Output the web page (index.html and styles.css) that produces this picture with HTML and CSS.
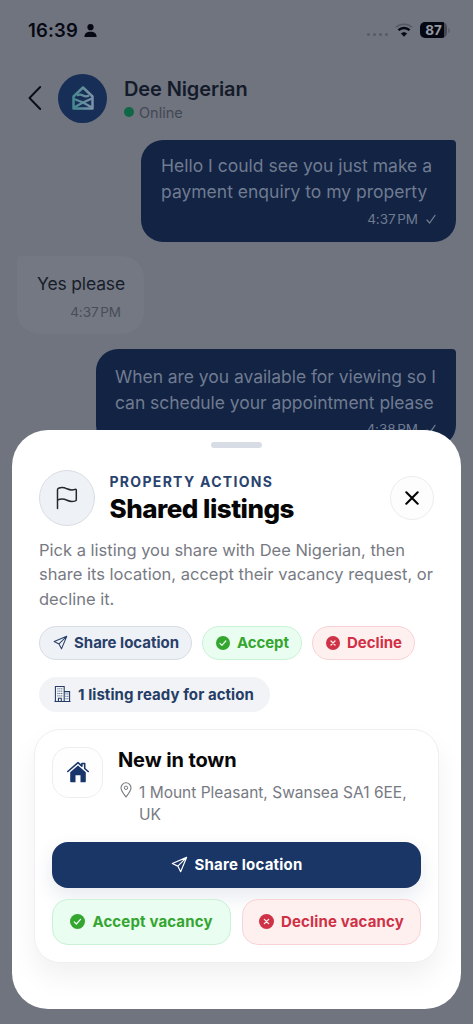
FILE: index.html
```html
<!DOCTYPE html>
<html lang="en">
<head>
<meta charset="utf-8">
<title>Shared listings</title>
<link rel="stylesheet" href="styles.css">
</head>
<body>
<svg class="defs" aria-hidden="true">
  <symbol id="plane" viewBox="0 0 18 18"><path d="M16.5 1.5 1.4 7.9l5.8 2.800 3 5.900ZM16.500 1.500 7.200 10.700" fill="none" stroke="currentColor" stroke-width="1.250" stroke-linejoin="round" stroke-linecap="round"/></symbol>
  <symbol id="check" viewBox="0 0 16 16"><circle cx="8" cy="8" r="8" fill="currentColor"/><path d="m4.5 8.4 2.3 2.3 4.4-5" fill="none" stroke="#e9fff0" stroke-width="1.4" stroke-linecap="round" stroke-linejoin="round"/></symbol>
  <symbol id="cross" viewBox="0 0 16 16"><circle cx="8" cy="8" r="8" fill="currentColor"/><path d="m5.7 5.7 4.600 4.600m0-4.600-4.600 4.600" fill="none" stroke="#fff0f0" stroke-width="1.400" stroke-linecap="round"/></symbol>
</svg>
<div class="phone">
  <main class="chat">
    <div class="status">
      <span class="time">16:39</span>
      <svg class="person" viewBox="0 0 13 13"><circle cx="6.5" cy="3.2" r="3.1"/><path d="M.4 13c0-3.6 2.3-5.3 6.1-5.3s6.1 1.7 6.1 5.3Z"/></svg>
      <span class="signal"><i></i><i></i><i></i><i></i></span>
      <svg class="wifi" viewBox="0 0 18 14"><path d="M1 4.3a12 12 0 0 1 16 0" fill="none" stroke="#555963" stroke-width="1.5"/><path d="M3.4 7.2a8.2 8.2 0 0 1 11.2 0" fill="none" stroke="#050812" stroke-width="2.4"/><path d="M6.4 10.6a4 4 0 0 1 5.2 0L9 13.3Z" fill="#050812" stroke="#050812" stroke-width=".8" stroke-linejoin="round"/></svg>
      <span class="battery">87</span><span class="nub"></span>
    </div>
    <header class="contact">
      <svg class="back" viewBox="0 0 14 26"><path d="M12.200 2 1.500 13l10.700 11" fill="none" stroke="#080d19" stroke-width="1.900" stroke-linecap="round" stroke-linejoin="round"/></svg>
      <div class="avatar"><svg viewBox="0 0 24 26"><defs><linearGradient id="mint" x1="0" y1="0" x2="1" y2="0"><stop offset="0" stop-color="#46898f"/><stop offset="1" stop-color="#7c92a8"/></linearGradient></defs><path d="M2.500 23.500V11.500L12 2.500l9.500 9v12Z" fill="none" stroke="url(#mint)" stroke-width="2.500" stroke-linejoin="round"/><path d="M6 10.500q3-1.800 6 0t6 0M3 14l9 3.500 9 5M21 13.500l-9 4-9 5" fill="none" stroke="url(#mint)" stroke-width="2.200"/></svg></div>
      <div class="who"><div class="name">Dee Nigerian</div><div class="online"><i></i><span>Online</span></div></div>
    </header>
    <section class="thread">
      <div class="bubble sent first"><p>Hello I could see you just make a<br>payment enquiry to my property</p><div class="meta">4:37 PM<svg viewBox="0 0 10 10"><path d="m1 6 2.6 3L9 1.3" fill="none" stroke="currentColor" stroke-width="1.2" stroke-linecap="round"/></svg></div></div>
      <div class="bubble received"><p>Yes please</p><div class="meta">4:37 PM</div></div>
      <div class="bubble sent second"><p>When are you available for viewing so I<br>can schedule your appointment please</p><div class="meta">4:38 PM<svg viewBox="0 0 10 10"><path d="m1 6 2.6 3L9 1.3" fill="none" stroke="currentColor" stroke-width="1.2" stroke-linecap="round"/></svg></div></div>
    </section>
  </main>
  <section class="sheet">
    <div class="handle"></div>
    <header class="heading">
      <div class="flag"><svg viewBox="0 0 22 24"><path d="M1.500 22.500V3.800Q1.500 2.800 2.600 2.200C5.800.7 8 1.300 11 2.800c3 1.300 5.600 1.500 8 .6q1.300-.4 1.300.6v9.700q0 .8-1 1.200c-3 1-5.300.8-8.300-.6-3.200-1.500-6-1.800-9.500-.1" fill="none" stroke="#24282e" stroke-width="1.500" stroke-linejoin="round" stroke-linecap="round"/></svg></div>
      <div class="titles"><div class="eyebrow">PROPERTY ACTIONS</div><h1>Shared listings</h1></div>
      <button class="close" aria-label="Close"><svg viewBox="0 0 14 14"><path d="m1.300 1.300 11.400 11.400m0-11.400L1.300 12.700" fill="none" stroke="#050505" stroke-width="2.100" stroke-linecap="round"/></svg></button>
    </header>
    <p class="intro">Pick a listing you share with Dee Nigerian, then<br>share its location, accept their vacancy request, or<br>decline it.</p>
    <div class="pills">
      <span class="pill share"><svg><use href="#plane"/></svg><b>Share location</b></span>
      <span class="pill accept"><svg><use href="#check"/></svg><b>Accept</b></span>
      <span class="pill decline"><svg><use href="#cross"/></svg><b>Decline</b></span>
    </div>
    <div class="count"><svg viewBox="0 0 18 18"><path d="M1.500 17V1h9.300v16M10.800 6.500h5.700V17M.5 17h17M4.700 17v-3.500h3V17" fill="none" stroke="currentColor" stroke-width="1.150"/><path d="M4.200 3v9M6.200 3v9M8.200 3v9M12.700 8.500v7M14.700 8.500v7" fill="none" stroke="currentColor" stroke-width="1" stroke-dasharray="1 1.500"/></svg><b>1 listing ready for action</b></div>
    <article class="card">
      <div class="listing">
        <div class="tile"><svg viewBox="0 0 22 22"><path d="M.8 10.500 11 1.700l3.900 3.400V2.500h2.800v5l3.500 3" fill="none" stroke="#19366a" stroke-width="1.600" stroke-linecap="round" stroke-linejoin="round"/><path d="m11 4.600 7.800 6.700v9.200q0 .8-.8.800h-4.500v-7h-5v7H4q-.8 0-.8-.8v-9.200Z" fill="#19366a"/></svg></div>
        <div class="info"><h2>New in town</h2><div class="address"><svg viewBox="0 0 12 16"><path d="M6 15C4.200 12.500 1 9 1 5.800a5 5 0 0 1 10 0C11 9 7.800 12.500 6 15Z" fill="none" stroke="currentColor" stroke-width="1.100"/><circle cx="6" cy="5.800" r="1.700" fill="none" stroke="currentColor"/></svg><p>1 Mount Pleasant, Swansea SA1 6EE,<br>UK</p></div></div>
      </div>
      <button class="primary"><svg><use href="#plane"/></svg><span>Share location</span></button>
      <div class="choices"><button class="accept"><svg><use href="#check"/></svg><span>Accept vacancy</span></button><button class="decline"><svg><use href="#cross"/></svg><span>Decline vacancy</span></button></div>
    </article>
  </section>
</div>
</body>
</html>
```
FILE: styles.css
```css
* { box-sizing: border-box; }
body, p, h1, h2 { margin: 0; }
body { font-family: Inter, "Liberation Sans", sans-serif; }
svg { display: block; flex: none; }
i { display: block; }
button { font-family: inherit; padding: 0; }
.defs { position: absolute; width: 0; height: 0; }
.phone { position: relative; width: 473px; height: 1024px; overflow: hidden; background: #70747f; white-space: nowrap; }
.chat { display: flex; flex-direction: column; }
.status { height: 60px; display: flex; align-items: center; padding: 0 23px 0 28px; color: #060914; }
.time { width: 50px; font-size: 18.5px; font-weight: 600; letter-spacing: .15px; }
.person { width: 13px; height: 13px; margin-left: 6px; fill: #060914; }
.signal { display: flex; gap: 2.500px; margin: 9px 7px 0 auto; }
.signal i { width: 3.500px; height: 3.500px; border-radius: 2px; background: #575b66; }
.wifi { width: 18px; height: 14px; margin-right: 7px; }
.battery { width: 27px; height: 16px; border-radius: 5px; background: linear-gradient(90deg, #050812 88%, #464a54 88%); color: #969aa4; font-size: 13.500px; line-height: 16px; font-weight: 700; text-align: center; }
.nub { width: 2px; height: 5px; margin-left: 1px; border-radius: 0 2px 2px 0; background: #5d616c; }
.contact { height: 79px; display: flex; align-items: center; padding: 0 28px 3px; }
.back { width: 14px; height: 26px; }
.avatar { width: 49px; height: 49px; margin-left: 16px; border-radius: 50%; background: #172e56; display: grid; place-items: center; }
.avatar svg { width: 24px; height: 26px; }
.who { margin-left: 17px; padding-top: 3px; }
.name { font-size: 20px; line-height: 25px; font-weight: 600; letter-spacing: -.12px; color: #141b2a; }
.online { display: flex; align-items: center; gap: 5px; font-size: 14.500px; line-height: 21px; color: #424854; }
.online i { width: 10px; height: 10px; border-radius: 50%; background: #106746; }
.thread { display: flex; flex-direction: column; padding: 1px 17px 0; align-items: flex-end; }
.bubble { font-size: 17.500px; line-height: 25.500px; }
.sent { background: #122344; color: #707b90; border-radius: 22px 4px 22px 22px; }
.first { width: 315px; height: 102px; padding: 13px 20px; }
.second { width: 360px; height: 98px; margin-top: 15px; padding: 15px 20px; }
.second p { margin-left: -1px; letter-spacing: -.05px; }
.received { align-self: flex-start; width: 127px; height: 78px; margin-top: 14px; padding: 15px 20px; background: #747883; color: #171d2a; border-radius: 4px 22px 22px 22px; }
.received p { letter-spacing: -.15px; }
.meta { display: flex; justify-content: flex-end; align-items: center; gap: 8px; font-size: 13.500px; line-height: 18px; margin-top: 6px; letter-spacing: -.05px; word-spacing: -2px; }
.second .meta { margin-top: 5px; }
.meta svg { width: 10px; height: 10px; }
.received .meta { color: #474d59; padding-right: 3px; margin-top: 6px; }
.sheet { position: absolute; left: 12px; top: 430px; width: 449px; height: 579px; padding: 12px 22px; border-radius: 36px; background: #fff; overflow: hidden; }
.handle { width: 51px; height: 6px; margin: 0 auto; border-radius: 3px; background: #d8dce5; }
.heading { display: flex; align-items: center; margin: 22px 5px 0; height: 56px; }
.flag { width: 56px; height: 56px; border: 1px solid #d8dde3; border-radius: 50%; background: #eef1f5; display: grid; place-items: center; }
.flag svg { width: 22px; height: 24px; }
.titles { margin-left: 14.500px; }
.eyebrow { font-size: 14px; line-height: 20px; font-weight: 700; letter-spacing: 1.300px; color: #29436f; }
h1 { font-size: 26px; line-height: 33px; font-weight: 800; letter-spacing: -.5px; color: #060606; }
.close { width: 44px; height: 44px; margin-left: auto; border: 1px solid #ececef; border-radius: 50%; background: #fdfdfd; display: grid; place-items: center; }
.close svg { width: 14px; height: 14px; }
.intro { margin: 12px 5px 0; font-size: 16.500px; line-height: 24.300px; color: #777a83; }
.pills { display: flex; gap: 10px; margin: 15px 5px 0; }
.pill { height: 34px; display: flex; align-items: center; border: 1px solid; border-radius: 17px; font-size: 15px; padding-left: 13px; gap: 7px; }
.pill b, .count b { font-weight: 700; }
.pill svg { width: 14px; height: 14px; }
.share { width: 153px; color: #29406a; background: #eef1f5; border-color: #d8dce4; }
.pill.share { gap: 6px; }
.share svg { width: 15px; height: 15px; }
.pill.accept { width: 100px; }
.pill.accept b { letter-spacing: -.1px; }
.pill.decline { width: 103px; gap: 7px; }
.accept { color: #34a52f; background: #e9fdf1; border: 1px solid #c9f2d7; }
.decline { color: #cf3146; background: #fff0f0; border: 1px solid #f8d2d5; }
.count { width: 231px; height: 35px; margin: 17px 5px 0; padding-left: 15px; display: flex; align-items: center; gap: 7px; border-radius: 18px; background: #f1f3f6; color: #253d66; font-size: 15px; letter-spacing: .06px; }
.count svg { width: 17px; height: 18px; }
.card { width: 405px; height: 234px; margin-top: 17px; padding: 17px; border: 1px solid #efeff2; border-radius: 26px; background: #fff; box-shadow: 0 14px 28px #1018280f; }
.listing { display: flex; height: 95px; }
.tile { width: 51px; height: 51px; border: 1px solid #eeeef1; border-radius: 17px; background: #fefefe; display: grid; place-items: center; }
.tile svg { width: 22px; height: 22px; }
.info { margin-left: 15px; }
h2 { font-size: 20px; line-height: 27px; font-weight: 700; letter-spacing: -.12px; color: #080808; }
.address { display: flex; gap: 7px; margin: 8px 0 0 2px; font-size: 15.500px; line-height: 22px; color: #777a83; }
.address svg { width: 12px; height: 16px; }
.card button { height: 46px; border-radius: 16px; display: flex; align-items: center; justify-content: center; gap: 7px; font-size: 15px; font-weight: 700; letter-spacing: .15px; }
.card .primary { width: 369px; border: 0; background: #193666; color: #fff; letter-spacing: .2px; box-shadow: 0 8px 20px #1936661c; }
.primary svg { width: 17px; height: 17px; }
.choices { display: grid; grid-template-columns: 1fr 1fr; gap: 11px; margin-top: 11px; }
.choices svg { width: 15px; height: 15px; }
```
